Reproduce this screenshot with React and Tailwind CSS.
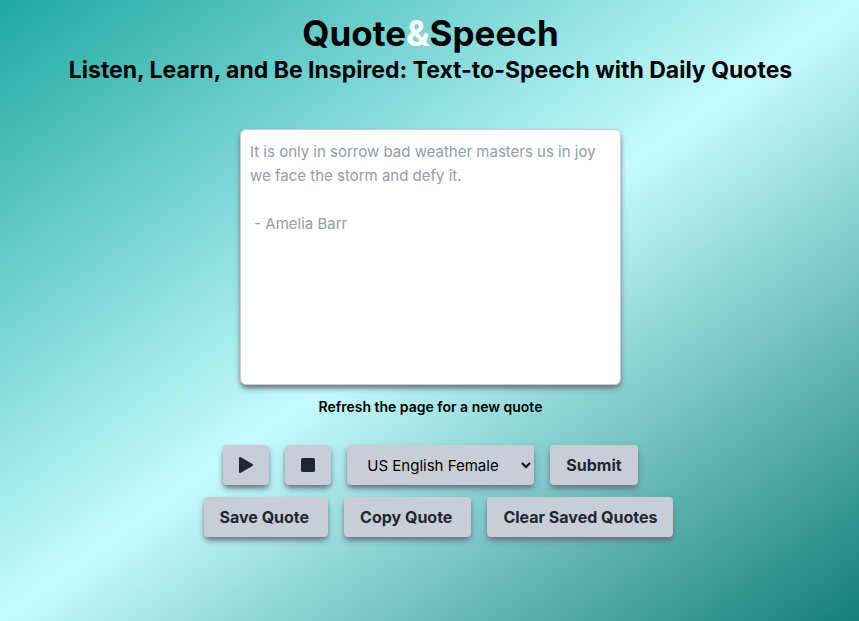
import React, { useState } from "react";

const surface =
  "h-10 rounded bg-[#c9ced6] shadow-[0_4px_6px_-1px_#6b7280,0_2px_4px_-2px_#6b7280]";

const button = `${surface} flex items-center justify-center whitespace-nowrap text-base font-bold text-[#1f2733]`;

const QUOTE =
  "It is only in sorrow bad weather masters us in joy we face the storm and defy it.\n\n - Amelia Barr";

const VOICES = ["US English Female", "US English Male", "UK English Female", "UK English Male"];

export default function App() {
  const [text, setText] = useState("");

  return (
    <main className="flex min-h-screen flex-col items-center bg-linear-to-br/srgb from-[#1fa8a0] via-[#c5fbff] to-[#147e78] pl-0.5 font-[Inter,sans-serif] text-black">
      <header className="pt-3 text-center">
        <h1 className="text-[35px] leading-[42px] font-bold">
          Quote<span className="text-white">&amp;</span>Speech
        </h1>
        <h2 className="text-[23px] leading-8 font-bold">
          Listen, Learn, and Be Inspired: Text-to-Speech with Daily Quotes
        </h2>
      </header>

      <textarea
        aria-label="Text to speak"
        className="mt-[43px] h-64 w-full max-w-[381px] resize-none rounded-md border border-[#c9ced6] bg-white px-[9px] py-2.5 text-[15px] leading-6 shadow-[0_4px_6px_-1px_#6b7280,0_2px_4px_-2px_#6b7280] placeholder:text-[#949ca9]"
        placeholder={QUOTE}
        value={text}
        onChange={(event) => setText(event.target.value)}
      />
      <p className="mt-3 text-sm font-semibold">Refresh the page for a new quote</p>

      <div className="mt-7 flex gap-4">
        <button type="button" aria-label="Play" className={`${button} px-4`}>
          <svg viewBox="0 0 14 16" className="h-4 w-3.5" fill="currentColor" aria-hidden="true">
            <path d="M0 1.3C0 .2.9-.3 1.8.2l11.6 6.9c.8.5.8 1.3 0 1.8L1.8 15.8C.9 16.3 0 15.8 0 14.7Z" />
          </svg>
        </button>
        <button type="button" aria-label="Stop" className={`${button} px-4`}>
          <svg viewBox="0 0 14 14" className="size-3.5" fill="currentColor" aria-hidden="true">
            <rect width="14" height="14" rx="1.5" />
          </svg>
        </button>
        <select aria-label="Voice" className={`${surface} w-[187px] pl-4 text-[15px]`}>
          {VOICES.map((voice) => (
            <option key={voice}>{voice}</option>
          ))}
        </select>
        <button type="button" className={`${button} px-4`}>Submit</button>
      </div>

      <div className="mt-3 flex gap-4 pl-4">
        <button type="button" className={`${button} pr-[19px] pl-4`}>Save Quote</button>
        <button type="button" className={`${button} pr-[19px] pl-4`}>Copy Quote</button>
        <button type="button" className={`${button} px-4`}>Clear Saved Quotes</button>
      </div>
    </main>
  );
}
